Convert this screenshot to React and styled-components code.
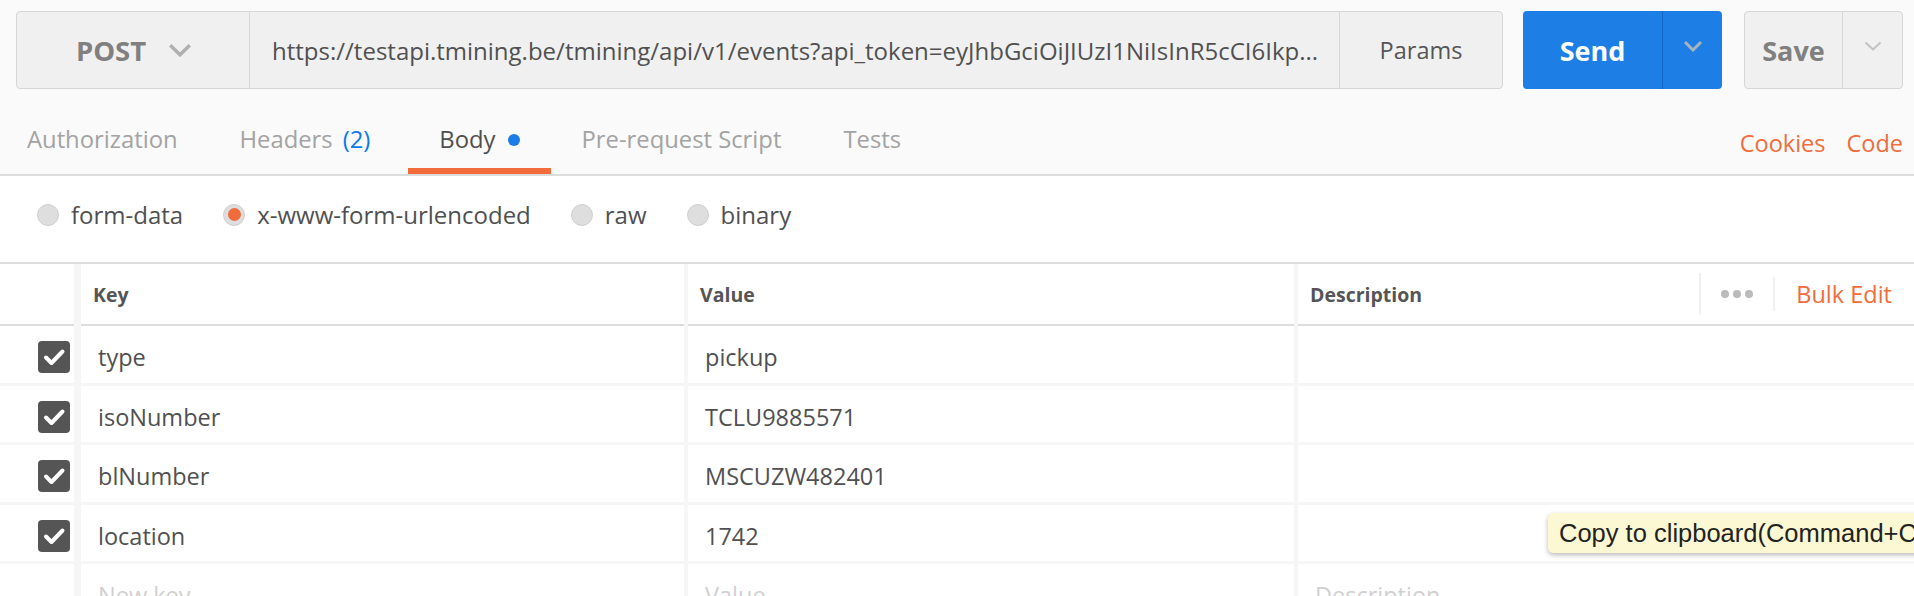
import React from "react";
import styled, { createGlobalStyle, css } from "styled-components";

const ORANGE = "#f26b3a";
const BLUE = "#1d7ee6";
const GAP = "#f6f6f6";
const LINE = "#dcdcdc";

const Global = createGlobalStyle`
  html, body { margin: 0; padding: 0; height: 596px; overflow: hidden; background: #fff; }
  body { font-family: "Open Sans", "Noto Sans", sans-serif; color: #505050; }
  * { box-sizing: border-box; }
`;

const Page = styled.div`
  width: 1914px;
  height: 596px;
  overflow: hidden;
  position: relative;
  background: #fff;
`;

const TopSection = styled.div`
  background: #fafafa;
  padding: 11px 11px 0 16px;
  border-bottom: 2px solid ${LINE};
`;

const RequestBar = styled.div`
  display: flex;
  height: 78px;
  align-items: stretch;
`;

const UrlGroup = styled.div`
  flex: 1;
  display: flex;
  background: #f0f0f0;
  border: 1px solid #d6d6d6;
  border-radius: 4px;
  overflow: hidden;
`;

const MethodSelect = styled.div`
  width: 233px;
  flex: none;
  display: flex;
  align-items: center;
  justify-content: center;
  gap: 22px;
  border-right: 1px solid #d8d8d8;
  font-weight: 700;
  font-size: 27.5px;
  color: #808080;
  padding-left: 2px;
`;

const UrlText = styled.div`
  flex: 1;
  min-width: 0;
  display: flex;
  align-items: center;
  padding: 0 10px 0 22px;
  font-size: 24px;
  color: #505050;
  white-space: nowrap;
  overflow: hidden;
`;

const ParamsButton = styled.div`
  width: 163px;
  flex: none;
  display: flex;
  align-items: center;
  justify-content: center;
  border-left: 1px solid #d8d8d8;
  font-size: 23.5px;
  color: #555;
`;

const SplitButton = styled.div`
  display: flex;
  flex: none;
  margin-left: ${(p) => p.$ml}px;
  border-radius: 4px;
  overflow: hidden;
  ${(p) =>
    p.$primary
      ? css`
          background: ${BLUE};
          border: 0;
        `
      : css`
          background: #f0f0f0;
          border: 1px solid #d6d6d6;
        `}
`;

const SplitMain = styled.div`
  width: ${(p) => p.$w}px;
  display: flex;
  align-items: center;
  justify-content: center;
  font-weight: 700;
  font-size: 27px;
  color: ${(p) => (p.$primary ? "#fff" : "#808080")};
`;

const SplitArrow = styled.div`
  width: 60px;
  display: flex;
  align-items: center;
  justify-content: center;
  padding-bottom: 8px;
  border-left: 1px solid ${(p) => (p.$primary ? "#1565c4" : "#d8d8d8")};
`;

const TabBar = styled.div`
  display: flex;
  align-items: flex-end;
  height: 85px;
  margin-left: -20px;
`;

const Tabs = styled.div`
  display: flex;
  flex: 1;
`;

const Tab = styled.div`
  height: 70px;
  padding: 0 31px;
  display: flex;
  align-items: center;
  font-size: 23.8px;
  color: ${(p) => (p.$active ? "#505050" : "#a3a3a3")};
  box-shadow: ${(p) => (p.$active ? `inset 0 -6px 0 ${ORANGE}` : "none")};
`;

const Count = styled.span`
  color: #097bed;
  margin-left: 10px;
  margin-right: 7px;
`;

const Dot = styled.span`
  width: 12px;
  height: 12px;
  border-radius: 50%;
  background: #1a7de8;
  margin-left: 12px;
  margin-top: 2px;
`;

const TabLinks = styled.div`
  display: flex;
  gap: 21px;
  height: 70px;
  align-items: center;
  padding-top: 8px;
`;

const OrangeLink = styled.span`
  color: ${ORANGE};
  font-size: 23.5px;
`;

const BodyTypes = styled.div`
  height: 88px;
  display: flex;
  align-items: center;
  gap: 40px;
  padding: 0 0 9px 37px;
  border-bottom: 2px solid ${LINE};
`;

const RadioItem = styled.label`
  display: flex;
  align-items: center;
  gap: 12px;
  font-size: 24px;
  color: #505050;
`;

const RadioCircle = styled.span`
  width: 22px;
  height: 22px;
  border-radius: 50%;
  background: #dedede;
  border: 1px solid #cfcfcf;
  display: flex;
  align-items: center;
  justify-content: center;
  &::after {
    content: "";
    width: 13px;
    height: 13px;
    border-radius: 50%;
    background: ${(p) => (p.$checked ? ORANGE : "transparent")};
  }
`;

const Table = styled.div`
  display: grid;
  grid-template-columns: 74px 610px 610px 1fr;
  background: ${GAP};
`;

const HeadCell = styled.div`
  height: 62px;
  background: #fff;
  display: flex;
  align-items: center;
  padding-left: 12px;
  margin-left: ${(p) => p.$gap || 0}px;
  font-weight: 700;
  font-size: 19.5px;
  color: #555;
  border-bottom: 2px solid ${LINE};
`;

const Cell = styled.div`
  height: 59.5px;
  background: #fff;
  display: flex;
  align-items: center;
  justify-content: ${(p) => (p.$center ? "flex-end" : "flex-start")};
  padding-top: 6px;
  padding-left: ${(p) => (p.$center ? 0 : 17)}px;
  padding-right: ${(p) => (p.$center ? 4 : 0)}px;
  margin-left: ${(p) => p.$gap || 0}px;
  border-bottom: 3px solid ${GAP};
  font-size: 23.5px;
  color: ${(p) => (p.$placeholder ? "#d0d0d0" : "#505050")};
`;

const HeadTools = styled.div`
  margin-left: auto;
  display: flex;
  align-items: center;
  height: 100%;
  padding-right: 22px;
`;

const Divider = styled.span`
  width: 2px;
  height: ${(p) => p.$h}px;
  background: #f0f0f0;
`;

const Dots = styled.div`
  width: 72px;
  display: flex;
  justify-content: center;
  gap: 4px;
  & > span {
    width: 8px;
    height: 8px;
    border-radius: 50%;
    background: #bbb;
  }
`;

const BulkEdit = styled.span`
  font-weight: 400;
  font-size: 23.5px;
  color: ${ORANGE};
  margin-left: 21px;
`;

const Check = styled.span`
  width: 32px;
  height: 32px;
  border-radius: 4px;
  background: #555;
  display: flex;
  align-items: center;
  justify-content: center;
`;

const Tooltip = styled.div`
  position: absolute;
  left: 1548px;
  top: 513px;
  height: 40px;
  padding: 0 0 0 11px;
  display: flex;
  align-items: center;
  background: #fbf8d3;
  border-radius: 5px;
  box-shadow: 0 2px 5px rgba(0, 0, 0, 0.28);
  font-family: "Liberation Sans", Arial, sans-serif;
  font-size: 25.5px;
  color: #222;
  white-space: nowrap;
`;

const Chevron = ({ w = 24, h = 14, color = "#aaa", sw = 3 }) => (
  <svg width={w} height={h} viewBox={`0 0 ${w} ${h}`} fill="none">
    <polyline
      points={`${sw / 2 + 0.5},${sw / 2 + 0.5} ${w / 2},${h - sw / 2 - 0.5} ${w - sw / 2 - 0.5},${sw / 2 + 0.5}`}
      stroke={color}
      strokeWidth={sw}
      strokeLinecap="butt"
      strokeLinejoin="miter"
    />
  </svg>
);

const CheckMark = () => (
  <svg width="32" height="32" viewBox="0 0 32 32" fill="none">
    <polyline points="8,16.5 13.5,22 24.5,10.5" stroke="#fff" strokeWidth="4" strokeLinecap="round" strokeLinejoin="round" />
  </svg>
);

const rows = [
  { key: "type", value: "pickup" },
  { key: "isoNumber", value: "TCLU9885571" },
  { key: "blNumber", value: "MSCUZW482401" },
  { key: "location", value: "1742" },
];

export default function App() {
  return (
    <Page>
      <Global />
      <TopSection>
        <RequestBar>
          <UrlGroup>
            <MethodSelect>
              POST
              <Chevron w={24} h={14} color="#b0b0b0" sw={3.5} />
            </MethodSelect>
            <UrlText>
              https://testapi.tmining.be/tmining/api/v1/events?api_token=eyJhbGciOiJIUzI1NiIsInR5cCI6Ikp...
            </UrlText>
            <ParamsButton>Params</ParamsButton>
          </UrlGroup>
          <SplitButton $primary $ml={20}>
            <SplitMain $primary $w={139}>Send</SplitMain>
            <SplitArrow $primary>
              <Chevron w={20} h={12} color="#a9b3bd" sw={3} />
            </SplitArrow>
          </SplitButton>
          <SplitButton $ml={22}>
            <SplitMain $w={97}>Save</SplitMain>
            <SplitArrow>
              <Chevron w={18} h={10} color="#c2c2c2" sw={2} />
            </SplitArrow>
          </SplitButton>
        </RequestBar>
        <TabBar>
          <Tabs>
            <Tab>Authorization</Tab>
            <Tab>
              Headers<Count>(2)</Count>
            </Tab>
            <Tab $active>
              Body<Dot />
            </Tab>
            <Tab>Pre-request Script</Tab>
            <Tab>Tests</Tab>
          </Tabs>
          <TabLinks>
            <OrangeLink>Cookies</OrangeLink>
            <OrangeLink>Code</OrangeLink>
          </TabLinks>
        </TabBar>
      </TopSection>

      <BodyTypes>
        <RadioItem>
          <RadioCircle />
          form-data
        </RadioItem>
        <RadioItem>
          <RadioCircle $checked />
          x-www-form-urlencoded
        </RadioItem>
        <RadioItem>
          <RadioCircle />
          raw
        </RadioItem>
        <RadioItem>
          <RadioCircle />
          binary
        </RadioItem>
      </BodyTypes>

      <Table>
        <HeadCell />
        <HeadCell $gap={7}>Key</HeadCell>
        <HeadCell $gap={4}>Value</HeadCell>
        <HeadCell $gap={4}>
          Description
          <HeadTools>
            <Divider $h={42} />
            <Dots>
              <span />
              <span />
              <span />
            </Dots>
            <Divider $h={34} />
            <BulkEdit>Bulk Edit</BulkEdit>
          </HeadTools>
        </HeadCell>

        {rows.map((r) => (
          <React.Fragment key={r.key}>
            <Cell $center>
              <Check>
                <CheckMark />
              </Check>
            </Cell>
            <Cell $gap={7}>{r.key}</Cell>
            <Cell $gap={4}>{r.value}</Cell>
            <Cell $gap={4} />
          </React.Fragment>
        ))}

        <Cell $center />
        <Cell $gap={7} $placeholder>New key</Cell>
        <Cell $gap={4} $placeholder>Value</Cell>
        <Cell $gap={4} $placeholder>Description</Cell>
      </Table>

      <Tooltip>Copy to clipboard(Command+C)</Tooltip>
    </Page>
  );
}
